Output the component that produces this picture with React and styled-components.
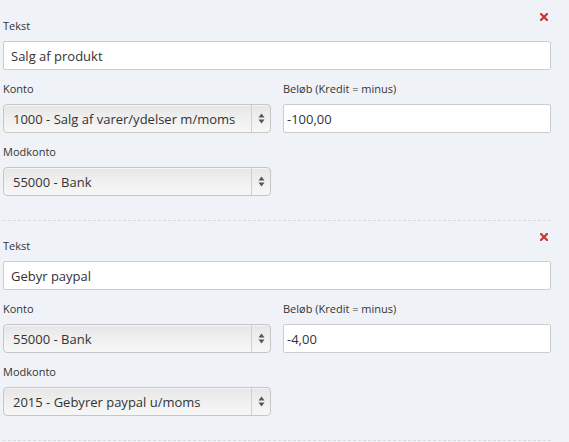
import React from "react";
import styled, { createGlobalStyle } from "styled-components";

const GlobalStyle = createGlobalStyle`
  html, body {
    margin: 0;
    padding: 0;
    background: #eff3f7;
  }
  body {
    font-family: "Open Sans", "Liberation Sans", sans-serif;
    color: #333;
  }
`;

const lines = [
  {
    tekst: "Salg af produkt",
    konto: "1000 - Salg af varer/ydelser m/moms",
    beloeb: "-100,00",
    modkonto: "55000 - Bank",
  },
  {
    tekst: "Gebyr paypal",
    konto: "55000 - Bank",
    beloeb: "-4,00",
    modkonto: "2015 - Gebyrer paypal u/moms",
  },
];

export default function App() {
  return (
    <>
      <GlobalStyle />
      <Wrapper>
        {lines.map((line, i) => (
          <Entry key={i}>
            <RemoveButton type="button" aria-label="Fjern">
              <svg width="8" height="8" viewBox="0 0 8 8">
                <path d="M1 1 L7 7 M7 1 L1 7" stroke="#c9362f" strokeWidth="2.2" strokeLinecap="square" />
              </svg>
            </RemoveButton>
            <Group>
              <Label>Tekst</Label>
              <TextInput defaultValue={line.tekst} />
            </Group>
            <Row>
              <Group>
                <Label>Konto</Label>
                <Select value={line.konto} />
              </Group>
              <Group>
                <Label>Beløb (Kredit = minus)</Label>
                <TextInput defaultValue={line.beloeb} $compact />
              </Group>
            </Row>
            <Row>
              <Group>
                <Label>Modkonto</Label>
                <Select value={line.modkonto} />
              </Group>
            </Row>
          </Entry>
        ))}
      </Wrapper>
    </>
  );
}

function Select({ value }) {
  return (
    <SelectBox>
      <SelectValue>{value}</SelectValue>
      <SelectArrows>
        <svg width="7" height="11" viewBox="0 0 7 11">
          <path d="M3.5 0.5 L6.5 4.5 L0.5 4.5 Z" fill="#555" />
          <path d="M3.5 10.5 L6.5 6.5 L0.5 6.5 Z" fill="#555" />
        </svg>
      </SelectArrows>
    </SelectBox>
  );
}

const Wrapper = styled.div`
  width: 548px;
  margin-left: 3px;
  padding-top: 1px;
`;

const Entry = styled.div`
  position: relative;
  display: flex;
  flex-direction: column;
  gap: 11px;
  padding: 17px 0 24px;
  border-bottom: 1px dashed #d6dadf;
`;

const RemoveButton = styled.button`
  position: absolute;
  top: 11px;
  right: 2px;
  width: 10px;
  height: 10px;
  padding: 0;
  border: 0;
  background: none;
  display: flex;
  align-items: center;
  justify-content: center;
  cursor: pointer;
`;

const Row = styled.div`
  display: grid;
  grid-template-columns: 1fr 1fr;
  column-gap: 12px;
`;

const Group = styled.div`
  display: flex;
  flex-direction: column;
  gap: 8px;
`;

const Label = styled.label`
  font-size: 11px;
  line-height: 15px;
  color: #333;
`;

const TextInput = styled.input`
  box-sizing: border-box;
  width: 100%;
  height: 29px;
  margin: 0;
  padding: 0 ${(p) => (p.$compact ? "3px" : "7px")};
  border: 1px solid #cccccc;
  border-radius: 2px;
  background: #fff;
  font-family: "Open Sans", "Liberation Sans", sans-serif;
  font-size: 13px;
  color: #333;
  outline: none;
`;

const SelectBox = styled.div`
  box-sizing: border-box;
  display: flex;
  align-items: stretch;
  height: 29px;
  border: 1px solid #c6c6c6;
  border-radius: 4px;
  background: linear-gradient(to bottom, #e6e6e6 0%, #efefef 45%, #f7f7f7 100%);
  box-shadow: inset 0 1px 0 rgba(255, 255, 255, 0.6);
`;

const SelectValue = styled.span`
  flex: 1;
  display: flex;
  align-items: center;
  padding-left: 9px;
  font-size: 13px;
  color: #333;
  white-space: nowrap;
  overflow: hidden;
`;

const SelectArrows = styled.span`
  width: 18px;
  display: flex;
  align-items: center;
  justify-content: center;
  border-left: 1px solid #d0d0d0;
`;
